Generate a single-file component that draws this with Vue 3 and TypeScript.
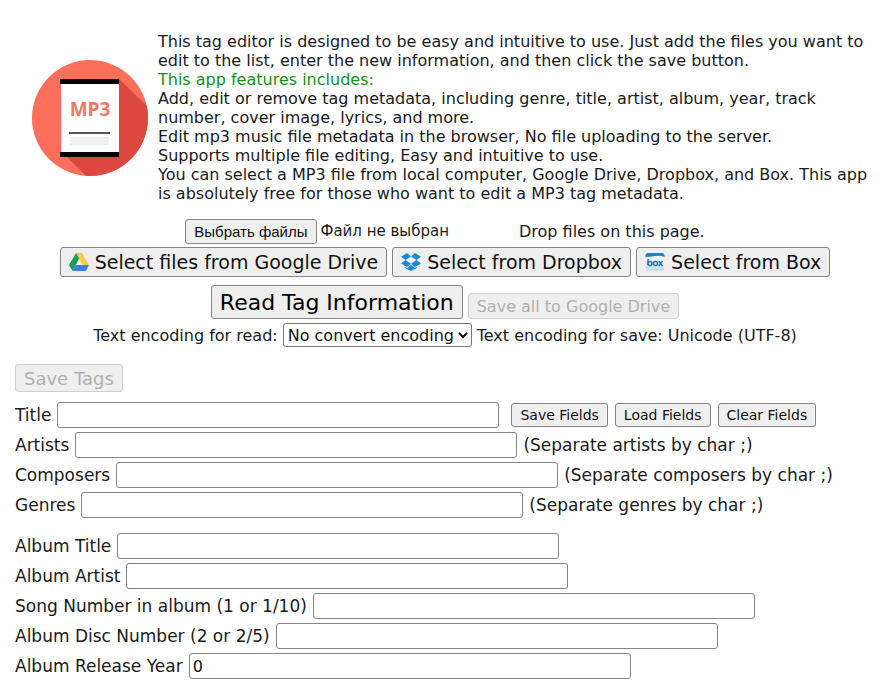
<script setup lang="ts">
import { reactive, ref } from 'vue'

interface Field {
  id: string
  label: string
  hint?: string
}

const trackFields: Field[] = [
  { id: 'title', label: 'Title' },
  { id: 'artists', label: 'Artists', hint: '(Separate artists by char ;)' },
  { id: 'composers', label: 'Composers', hint: '(Separate composers by char ;)' },
  { id: 'genres', label: 'Genres', hint: '(Separate genres by char ;)' },
]

const albumFields: Field[] = [
  { id: 'albumTitle', label: 'Album Title' },
  { id: 'albumArtist', label: 'Album Artist' },
  { id: 'songNumber', label: 'Song Number in album (1 or 1/10)' },
  { id: 'discNumber', label: 'Album Disc Number (2 or 2/5)' },
  { id: 'releaseYear', label: 'Album Release Year' },
]

const values = reactive<Record<string, string>>({ releaseYear: '0' })
const encoding = ref('none')

function clearFields(): void {
  for (const field of [...trackFields, ...albumFields]) values[field.id] = ''
}
</script>

<template>
  <main class="page">
    <section class="intro">
      <svg class="logo" viewBox="0 0 116 116" aria-hidden="true">
        <clipPath id="disc"><circle cx="58" cy="58" r="58" /></clipPath>
        <g clip-path="url(#disc)">
          <rect width="116" height="116" fill="#fd6f5a" />
          <path d="M87 19 L116 47 V116 H54 L29 91 Z" fill="#dc4840" />
        </g>
        <rect x="29" y="19" width="58" height="78" fill="#fff" />
        <rect x="28" y="19" width="59" height="5" fill="#000" />
        <rect x="28" y="92" width="59" height="5" fill="#000" />
        <text x="58" y="56" text-anchor="middle" class="logo-text">MP3</text>
        <rect x="37" y="72" width="41" height="2" fill="#555" />
        <rect x="38" y="77" width="39" height="8" fill="#eee" />
        <path d="M38 79.500H77M38 82.500H77" stroke="#f8f8f8" />
      </svg>
      <div class="intro-text">
        <p>This tag editor is designed to be easy and intuitive to use. Just add the files you want to edit to the list, enter the new information, and then click the save button.</p>
        <p class="features">This app features includes:</p>
        <p>Add, edit or remove tag metadata, including genre, title, artist, album, year, track number, cover image, lyrics, and more.</p>
        <p>Edit mp3 music file metadata in the browser, No file uploading to the server.</p>
        <p>Supports multiple file editing, Easy and intuitive to use.</p>
        <p>You can select a MP3 file from local computer, Google Drive, Dropbox, and Box. This app is absolutely free for those who want to edit a MP3 tag metadata.</p>
      </div>
    </section>

    <section class="row files">
      <div class="picker">
        <input id="files" class="native-file" type="file" multiple />
        <label class="btn file-btn" for="files">Выбрать файлы</label>
        <span>Файл не выбран</span>
      </div>
      <span>Drop files on this page.</span>
    </section>

    <section class="row sources">
      <button type="button" class="btn large">
        <svg class="icon" viewBox="0 0 20 18" aria-hidden="true">
          <path d="M7 0H13L20 12H13.500Z" fill="#fccb45" />
          <path d="M7 0L10.200 5.500L3.500 18L0 12Z" fill="#159f5b" />
          <path d="M6.600 12H20L16.700 18H3.500Z" fill="#3f7fe8" />
        </svg>
        Select files from Google Drive
      </button>
      <button type="button" class="btn large">
        <svg class="icon" viewBox="0 0 20 18" aria-hidden="true">
          <path d="M6 0L10 3.500L4.500 7L0 3.800ZM14 0L20 3.800L15.500 7L10 3.500ZM4.500 7L10 10.700L6 14L0 10.500ZM15.500 7L20 10.500L14 14L10 10.700ZM10 11.800L14 15L16 14V15L10 18L4 15V14L6 15Z" fill="#168bd0" />
        </svg>
        Select from Dropbox
      </button>
      <button type="button" class="btn large">
        <svg class="icon" viewBox="0 0 20 18" aria-hidden="true">
          <defs>
            <linearGradient id="boxface" x1="0" y1="0" x2="0" y2="1">
              <stop offset="0" stop-color="#f8fbfd" />
              <stop offset="1" stop-color="#c5dcec" />
            </linearGradient>
          </defs>
          <rect x="1" y="0" width="18" height="18" rx="1" fill="url(#boxface)" />
          <path d="M2 0H18L19.500 2V4Q15 2 10 3Q5 4 .5 4V2Z" fill="#1d83bf" />
          <g fill="none" stroke="#2f78a8" stroke-width="1.500">
            <path d="M3 6V12M13.700 8L17.500 13M17.500 8L13.700 13" />
            <circle cx="5" cy="10.500" r="2" />
            <circle cx="10.500" cy="10.500" r="2" />
          </g>
        </svg>
        Select from Box
      </button>
    </section>

    <section class="row actions">
      <button type="button" class="btn read">Read Tag Information</button>
      <button type="button" class="btn" disabled>Save all to Google Drive</button>
    </section>

    <section class="row encoding">
      <label for="encoding">Text encoding for read:</label>
      <select id="encoding" v-model="encoding">
        <option value="none">No convert encoding</option>
      </select>
      <span>Text encoding for save: Unicode (UTF-8)</span>
    </section>

    <form class="tags" @submit.prevent>
      <button type="submit" class="btn save" disabled>Save Tags</button>
      <div class="group">
        <div v-for="field in trackFields" :key="field.id" class="field">
          <label :for="field.id">{{ field.label }}</label>
          <input :id="field.id" v-model="values[field.id]" type="text" />
          <span v-if="field.hint">{{ field.hint }}</span>
          <div v-if="field.id === 'title'" class="field-actions">
            <button type="button" class="btn small">Save Fields</button>
            <button type="button" class="btn small">Load Fields</button>
            <button type="button" class="btn small" @click="clearFields">Clear Fields</button>
          </div>
        </div>
      </div>
      <div class="group">
        <div v-for="field in albumFields" :key="field.id" class="field">
          <label :for="field.id">{{ field.label }}</label>
          <input :id="field.id" v-model="values[field.id]" type="text" />
        </div>
      </div>
    </form>
  </main>
</template>

<style>
body {
  background: #fff;
}
</style>

<style scoped>
.page {
  padding: 32px 15px 0;
  color: #1a1a1a;
  font: 16px/19px Verdana, "DejaVu Sans", sans-serif;
}

.intro {
  display: flex;
  align-items: center;
  gap: 10px;
  padding-left: 17px;
}

.logo {
  flex: none;
  width: 116px;
  height: 116px;
}

.logo-text {
  fill: #f47663;
  font: bold 19px "Open Sans", "Noto Sans", sans-serif;
}

p {
  margin: 0;
}

.features {
  color: #159015;
}

.row {
  display: flex;
  justify-content: center;
  align-items: center;
  gap: 5px;
}

.btn {
  box-sizing: border-box;
  height: 26px;
  padding: 0 8px;
  border: 1px solid #858585;
  border-radius: 3px;
  background: #efefef;
  color: #111;
  font: inherit;
  white-space: nowrap;
}

.btn:disabled {
  border-color: #d0d0d0;
  color: #b0b0b0;
}

.files {
  gap: 70px;
  margin-top: 16px;
}

.picker {
  display: flex;
  align-items: center;
  gap: 4px;
  font-size: 15px;
}

.native-file {
  position: absolute;
  width: 1px;
  height: 1px;
  opacity: 0;
}

.file-btn {
  height: 25px;
  font: 15px/23px "Liberation Sans", Arial, sans-serif;
}

.sources {
  margin-top: 3px;
}

.large {
  display: flex;
  align-items: center;
  gap: 6px;
  height: 30px;
  font-size: 19px;
}

.icon {
  flex: none;
  width: 20px;
  height: 18px;
}

.actions {
  align-items: flex-end;
  margin-top: 8px;
}

.read {
  height: 34px;
  font-size: 22px;
  color: #000;
}

.encoding {
  margin-top: 4px;
}

select {
  box-sizing: border-box;
  height: 24px;
  border: 1px solid #767676;
  border-radius: 3px;
  background-color: #fff;
  color: #111;
  font: inherit;
}

.tags {
  margin-top: 17px;
  font-size: 17px;
}

.save {
  height: 28px;
  font-size: 18px;
}

.group {
  display: grid;
  gap: 4px;
  margin-top: 10px;
}

.group + .group {
  margin-top: 15px;
}

.field {
  display: flex;
  align-items: center;
  gap: 6px;
  white-space: nowrap;
}

.field input {
  box-sizing: border-box;
  width: 442px;
  height: 26px;
  padding: 0 3px;
  border: 1px solid #858585;
  border-radius: 3px;
  background: #fff;
  color: #111;
  font: inherit;
  font-size: 16px;
}

.field-actions {
  display: flex;
  gap: 7px;
  margin-left: 6px;
}

.small {
  height: 24px;
  font-size: 14px;
}
</style>
